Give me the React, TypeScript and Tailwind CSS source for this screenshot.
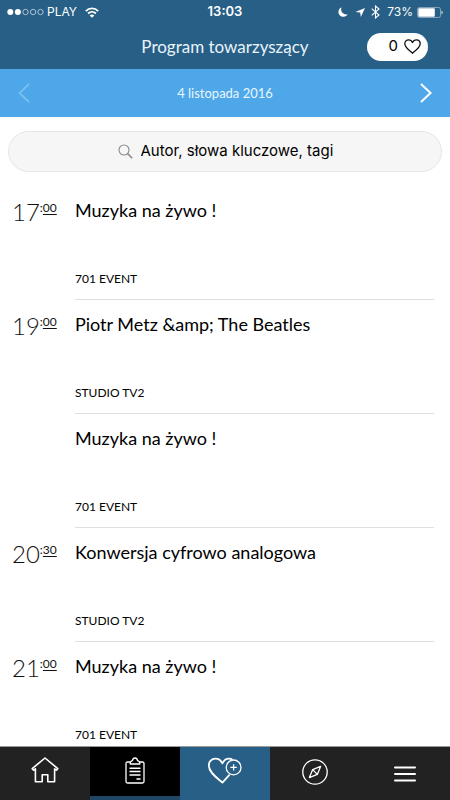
import React from "react";

type Session = { hour?: string; minutes?: string; title: string; place: string };

const sessions: Session[] = [
  { hour: "17", minutes: "00", title: "Muzyka na żywo !", place: "701 EVENT" },
  { hour: "19", minutes: "00", title: "Piotr Metz &amp; The Beatles", place: "STUDIO TV2" },
  { title: "Muzyka na żywo !", place: "701 EVENT" },
  { hour: "20", minutes: "30", title: "Konwersja cyfrowo analogowa", place: "STUDIO TV2" },
  { hour: "21", minutes: "00", title: "Muzyka na żywo !", place: "701 EVENT" },
];

function StatusBar() {
  return (
    <div className="grid h-6 grid-cols-3 items-center px-[7px] font-['Inter','Liberation_Sans',sans-serif] text-xs text-white">
      <div className="flex items-center">
        <svg width="37" height="8" viewBox="0 0 37 8" fill="none" stroke="#fff" aria-hidden="true">
          <circle cx="3.3" cy="4" r="3" fill="#fff" stroke="none" />
          <circle cx="10.9" cy="4" r="3" fill="#fff" stroke="none" />
          <circle cx="18.5" cy="4" r="2.7" strokeWidth="0.6" />
          <circle cx="26.1" cy="4" r="2.7" strokeWidth="0.6" />
          <circle cx="33.5" cy="4" r="2.7" strokeWidth="0.6" />
        </svg>
        <span className="ml-[3px]">PLAY</span>
        <svg className="ml-2" width="14" height="11" viewBox="0 0 14 11" fill="none" stroke="#fff" strokeWidth="1.8" aria-hidden="true">
          <path d="M0.8 4.1 C4.3 0.4 9.7 0.4 13.2 4.1" />
          <path d="M3.1 6.5 C5.3 4.3 8.7 4.3 10.9 6.5" />
          <path d="M7 10.8 L4.7 8.4 Q7 6.4 9.3 8.4 Z" fill="#fff" stroke="none" />
        </svg>
      </div>
      <span className="text-center text-[13px] font-semibold">13:03</span>
      <div className="flex items-center justify-end">
        <svg width="10" height="10" viewBox="0 0 10 10" fill="#fff" aria-hidden="true">
          <path d="M3.6 0.2 A5 5 0 1 0 9.8 7.3 A5.2 5.2 0 0 1 3.6 0.2 Z" />
        </svg>
        <svg className="ml-[7px]" width="10" height="9" viewBox="0 0 10 9" fill="#fff" aria-hidden="true">
          <path d="M10 0 L5.8 9 L5.2 4.6 L0.4 4 Z" />
        </svg>
        <svg className="ml-1.5" width="9" height="14" viewBox="0 0 9 14" fill="none" stroke="#fff" strokeWidth="1.1" aria-hidden="true">
          <path d="M0.7 3.6 L8 10 L4.5 13 V1 L8 4 L0.7 10.4" />
        </svg>
        <span className="ml-[7px]">73%</span>
        <svg className="ml-1" width="26" height="11" viewBox="0 0 26 11" aria-hidden="true">
          <rect x="0.5" y="0.5" width="23" height="10" rx="1.8" fill="none" stroke="#a9c0d1" strokeWidth="0.7" />
          <rect x="1.3" y="1.3" width="16.5" height="8.4" rx="0.8" fill="#fff" />
          <path d="M24.6 3.6 Q26.6 5.5 24.6 7.4 Z" fill="#fff" />
        </svg>
      </div>
    </div>
  );
}

function Header() {
  return (
    <header className="bg-[#285f86]">
      <StatusBar />
      <div className="grid h-[45px] grid-cols-[1fr_auto_1fr] items-center px-[22px]">
        <span />
        <h1 className="text-[17px] leading-6 text-[#e9f4fb]">Program towarzyszący</h1>
        <button
          type="button"
          aria-label="Ulubione: 0"
          className="flex h-7 w-[61px] items-center justify-end gap-1.5 justify-self-end rounded-full bg-white pr-[7px] text-black"
        >
          <span className="font-['Inter','Liberation_Sans',sans-serif] text-[15px]">0</span>
          <svg width="17" height="15" viewBox="0 0 17 15" fill="none" stroke="#111" strokeWidth="1.3" strokeLinejoin="round" aria-hidden="true">
            <path d="M8.5 14.2 C5.5 11.6 0.8 8.5 0.8 4.8 C0.8 2.4 2.5 0.8 4.6 0.8 C6.4 0.8 7.8 1.9 8.5 3.5 C9.2 1.9 10.6 0.8 12.4 0.8 C14.5 0.8 16.2 2.4 16.2 4.8 C16.2 8.5 11.5 11.6 8.5 14.2 Z" />
          </svg>
        </button>
      </div>
    </header>
  );
}

function DateBar() {
  return (
    <div className="flex h-12 items-center justify-between bg-[#4da7e8] px-[18px]">
      <button type="button" disabled aria-label="Poprzedni dzień" className="text-[#78c0ef]">
        <svg width="12" height="20" viewBox="0 0 12 20" fill="none" stroke="currentColor" strokeWidth="1.8" aria-hidden="true">
          <path d="M11 1 L1.4 10 L11 19" />
        </svg>
      </button>
      <span className="text-[13px] leading-5 text-[#e9f6ff]">4 listopada 2016</span>
      <button type="button" aria-label="Następny dzień" className="text-white">
        <svg width="12" height="20" viewBox="0 0 12 20" fill="none" stroke="currentColor" strokeWidth="2" aria-hidden="true">
          <path d="M1 1 L10.6 10 L1 19" />
        </svg>
      </button>
    </div>
  );
}

function SearchField() {
  return (
    <label className="mx-2 mt-[14px] flex h-[41px] items-center justify-center gap-2 rounded-full border border-[#e6e6e6] bg-[#f6f6f6]">
      <svg width="15" height="15" viewBox="0 0 15 15" fill="none" stroke="#888" strokeWidth="1.1" aria-hidden="true">
        <circle cx="6" cy="6" r="5" />
        <path d="M9.6 9.6 L14.2 14.2" strokeWidth="1.5" />
      </svg>
      <input
        type="text"
        aria-label="Szukaj"
        placeholder="Autor, słowa kluczowe, tagi"
        className="w-[192px] bg-transparent font-['Inter','Liberation_Sans',sans-serif] text-[15px] text-black outline-none placeholder:text-black"
      />
    </label>
  );
}

function SessionRow({ hour, minutes, title, place }: Session) {
  return (
    <li className="flex pr-4">
      <div className="w-[75px] shrink-0 pt-3 pl-3">
        {hour && (
          <time className="flex items-start text-[#111]">
            <span className="text-2xl leading-7 font-light">{hour}</span>
            <span className="text-xs leading-5">
              :<span className="underline underline-offset-2">{minutes}</span>
            </span>
          </time>
        )}
      </div>
      <div className="min-w-0 flex-1 border-b border-[#dfdfdf] pt-3 pb-[11px]">
        <h2 className="text-lg leading-6">{title}</h2>
        <p className="mt-12 text-xs leading-[18px]">{place}</p>
      </div>
    </li>
  );
}

function HomeIcon() {
  return (
    <svg width="28" height="26" viewBox="0 0 28 26" fill="none" stroke="#fff" strokeWidth="1.6" strokeLinejoin="round" aria-hidden="true">
      <path d="M14 1 L1.2 11.6 L2.6 13.2 L4.4 11.8 V24.8 H11.2 V17.8 H16.8 V24.8 H23.6 V11.8 L25.4 13.2 L26.8 11.6 Z" />
    </svg>
  );
}

function ClipboardIcon() {
  return (
    <svg width="20" height="28" viewBox="0 0 20 28" fill="none" stroke="#fff" strokeWidth="1.3" strokeLinejoin="round" aria-hidden="true">
      <path d="M5 5 H2.5 Q1 5 1 6.5 V24.5 Q1 26 2.5 26 H17.5 Q19 26 19 24.5 V6.5 Q19 5 17.5 5 H15" />
      <path d="M5.2 7 Q5 4.2 7.4 3.6 Q8 1 10 1 Q12 1 12.6 3.6 Q15 4.2 14.8 7 Z" />
      <path d="M4.5 11.2 H15.5 M4.5 14.6 H15.5 M4.5 18 H15.5 M11.5 22 H15.5" strokeWidth="1.5" />
    </svg>
  );
}

function HeartPlusIcon() {
  return (
    <svg width="36" height="28" viewBox="0 0 36 28" fill="none" stroke="#fff" strokeWidth="1.3" strokeLinejoin="round" aria-hidden="true">
      <path d="M22.6 17.6 L15.4 25.6 C10 20.8 1.8 15.5 1.8 8.6 C1.8 4.4 4.6 1.6 8.4 1.6 C11.6 1.6 14 3.4 15.4 6.4 C16.8 3.4 19 1.6 22 1.6 Q24 1.6 25.4 2.8" strokeWidth="1.8" />
      <circle cx="26.6" cy="10.4" r="7.4" />
      <path d="M26.6 7.2 V13.6 M23.4 10.4 H29.8" />
    </svg>
  );
}

function CompassIcon() {
  return (
    <svg width="26" height="26" viewBox="0 0 26 26" fill="none" stroke="#fff" strokeWidth="1.3" strokeLinejoin="round" aria-hidden="true">
      <circle cx="13" cy="13" r="12.2" />
      <path d="M18.6 7.4 L10.7 10.6 L7.4 18.6 L15.3 15.4 Z M10.7 10.6 L15.3 15.4" />
    </svg>
  );
}

function MenuIcon() {
  return (
    <svg width="22" height="16" viewBox="0 0 22 16" stroke="#fff" strokeWidth="2" strokeLinecap="round" aria-hidden="true">
      <path d="M1 1.5 H21 M1 8 H21 M1 14.5 H21" />
    </svg>
  );
}

function TabBar() {
  return (
    <nav className="grid h-[54px] shrink-0 grid-cols-5 border-t border-[#999] bg-[#222]">
      <a href="#start" aria-label="Start" className="flex justify-center pt-2.5">
        <HomeIcon />
      </a>
      <a href="#program" aria-label="Program" className="flex justify-center border-b-4 border-[#1d4765] bg-black pt-2.5">
        <ClipboardIcon />
      </a>
      <a href="#ulubione" aria-label="Dodaj do ulubionych" className="flex justify-center bg-[#285f86] pt-2.5">
        <HeartPlusIcon />
      </a>
      <a href="#mapa" aria-label="Mapa" className="flex justify-center pt-3">
        <CompassIcon />
      </a>
      <a href="#menu" aria-label="Menu" className="flex items-center justify-center">
        <MenuIcon />
      </a>
    </nav>
  );
}

export default function App() {
  return (
    <div className="flex h-screen flex-col bg-white font-['Lato','Open_Sans',sans-serif] text-black">
      <Header />
      <DateBar />
      <main className="min-h-0 flex-1 overflow-hidden">
        <SearchField />
        <ul className="mt-[14px]">
          {sessions.map((session, index) => (
            <SessionRow key={index} {...session} />
          ))}
        </ul>
      </main>
      <TabBar />
    </div>
  );
}
